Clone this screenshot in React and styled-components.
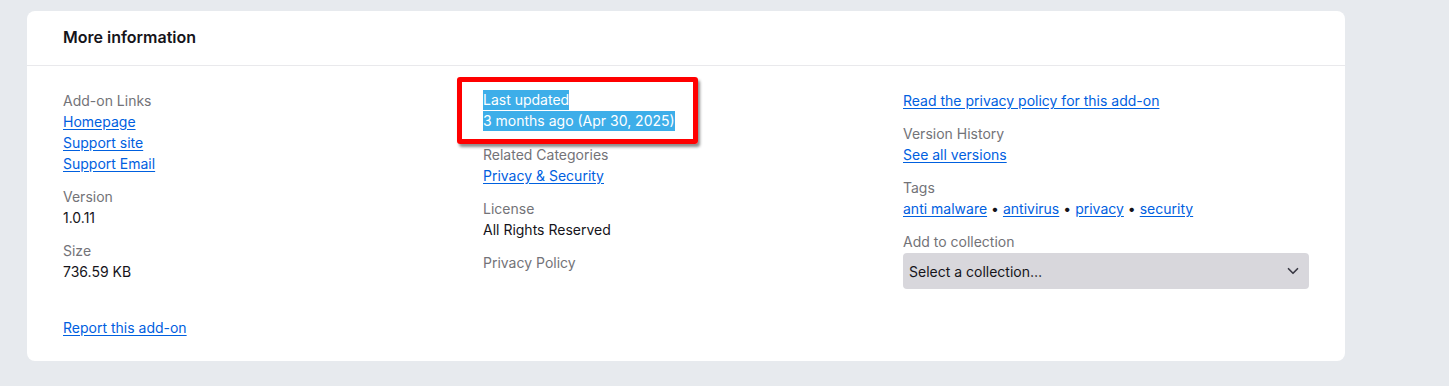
import React from "react";
import styled, { createGlobalStyle } from "styled-components";
import { ChevronDown } from "lucide-react";

const GlobalStyle = createGlobalStyle`
  body {
    margin: 0;
    background: #e7eaee;
    font-family: Inter, "Noto Sans", "Liberation Sans", sans-serif;
  }
`;

const Page = styled.div`
  padding: 11px 0 24px 27px;
`;

const Card = styled.section`
  width: 1318px;
  background: #ffffff;
  border-radius: 8px;
`;

const CardHeader = styled.header`
  padding: 15px 36px 17px;
  border-bottom: 1px solid #e9e9ec;
`;

const Title = styled.h2`
  margin: 0;
  font-size: 16px;
  line-height: 22px;
  font-weight: 600;
  color: #15141a;
`;

const CardBody = styled.div`
  padding: 24px 36px 23px;
`;

const Columns = styled.div`
  display: grid;
  grid-template-columns: repeat(3, 406px);
  column-gap: 14px;
  align-items: start;
`;

const Column = styled.dl`
  margin: 0;
  display: flex;
  flex-direction: column;
  gap: 12px;
`;

const Group = styled.div`
  position: relative;
  display: flex;
  flex-direction: column;
  font-size: 14px;
  line-height: 21px;
`;

const Label = styled.dt`
  color: #737378;
`;

const Value = styled.dd`
  margin: 0;
  color: #15141a;
`;

const Link = styled.a`
  color: #0060df;
  text-decoration: underline;
  text-underline-offset: 2px;
  cursor: pointer;
`;

const Highlight = styled.span`
  display: inline-block;
  vertical-align: top;
  background: #3daee9;
  color: #ffffff;
  line-height: 20px;
`;

const Annotation = styled.span`
  position: absolute;
  left: -26px;
  top: -13px;
  width: 241px;
  height: 67px;
  box-sizing: border-box;
  border: 5px solid #ff0000;
  border-radius: 3px;
  box-shadow: 2px 3px 3px rgba(0, 0, 0, 0.45);
  pointer-events: none;
`;

const Tags = styled.dd`
  margin: 0;
  color: #15141a;
  display: flex;
  gap: 4px;
`;

const Select = styled.div`
  margin-top: 1px;
  height: 36px;
  display: flex;
  align-items: center;
  justify-content: space-between;
  padding: 0 7px 0 6px;
  background: #d8d7dc;
  border-radius: 4px;
  font-size: 14px;
  color: #15141a;
  svg {
    color: #3a3944;
  }
`;

const Footer = styled.div`
  margin-top: 28px;
  font-size: 14px;
  line-height: 21px;
`;

export default function App() {
  const tags = ["anti malware", "antivirus", "privacy", "security"];
  return (
    <>
      <GlobalStyle />
      <Page>
        <Card>
          <CardHeader>
            <Title>More information</Title>
          </CardHeader>
          <CardBody>
            <Columns>
              <Column>
                <Group>
                  <Label>Add-on Links</Label>
                  <Value><Link>Homepage</Link></Value>
                  <Value><Link>Support site</Link></Value>
                  <Value><Link>Support Email</Link></Value>
                </Group>
                <Group>
                  <Label>Version</Label>
                  <Value>1.0.11</Value>
                </Group>
                <Group>
                  <Label>Size</Label>
                  <Value>736.59 KB</Value>
                </Group>
              </Column>

              <Column>
                <Group>
                  <Label><Highlight>Last updated</Highlight></Label>
                  <Value><Highlight>3 months ago (Apr 30, 2025)</Highlight></Value>
                  <Annotation />
                </Group>
                <Group>
                  <Label>Related Categories</Label>
                  <Value><Link>Privacy &amp; Security</Link></Value>
                </Group>
                <Group>
                  <Label>License</Label>
                  <Value>All Rights Reserved</Value>
                </Group>
                <Group>
                  <Label>Privacy Policy</Label>
                </Group>
              </Column>

              <Column>
                <Group>
                  <Value><Link>Read the privacy policy for this add-on</Link></Value>
                </Group>
                <Group>
                  <Label>Version History</Label>
                  <Value><Link>See all versions</Link></Value>
                </Group>
                <Group>
                  <Label>Tags</Label>
                  <Tags>
                    {tags.map((t, i) => (
                      <React.Fragment key={t}>
                        {i > 0 && <span>•</span>}
                        <Link>{t}</Link>
                      </React.Fragment>
                    ))}
                  </Tags>
                </Group>
                <Group>
                  <Label>Add to collection</Label>
                  <Select>
                    <span>Select a collection…</span>
                    <ChevronDown size={18} strokeWidth={2.25} />
                  </Select>
                </Group>
              </Column>
            </Columns>
            <Footer>
              <Link>Report this add-on</Link>
            </Footer>
          </CardBody>
        </Card>
      </Page>
    </>
  );
}
